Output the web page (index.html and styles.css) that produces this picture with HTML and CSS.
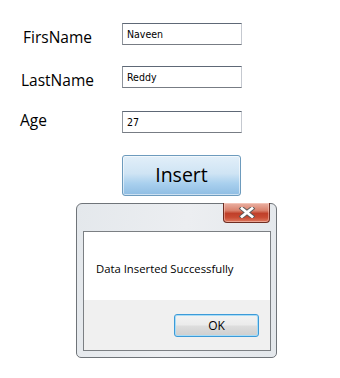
FILE: index.html
```html
<!DOCTYPE html>
<html>
<head>
<meta charset="utf-8">
<link rel="stylesheet" href="styles.css">
</head>
<body>
<div class="form">
  <div class="row row1">
    <span class="label l1">FirsName</span>
    <div class="textbox">Naveen</div>
  </div>
  <div class="row row2">
    <span class="label l2">LastName</span>
    <div class="textbox">Reddy</div>
  </div>
  <div class="row row3">
    <span class="label l3">Age</span>
    <div class="textbox">27</div>
  </div>
  <div class="btn-row">
    <div class="insert">Insert</div>
  </div>
</div>
<div class="dialog">
  <div class="titlebar">
    <div class="close">
      <svg width="18" height="11" viewBox="0 0 18 11">
        <path d="M4 1.5 L14 9.5 M14 1.5 L4 9.5" stroke="#595959" stroke-width="4.6" stroke-linecap="square" fill="none"/>
        <path d="M4 1.5 L14 9.5 M14 1.5 L4 9.5" stroke="#ffffff" stroke-width="2.8" stroke-linecap="square" fill="none"/>
      </svg>
    </div>
  </div>
  <div class="client">
    <div class="msg">Data Inserted Successfully</div>
    <div class="footer">
      <div class="ok">OK</div>
    </div>
  </div>
</div>
</body>
</html>
```
FILE: styles.css
```css
html, body {
  margin: 0;
  padding: 0;
  background: #ffffff;
}
body {
  width: 340px;
  height: 378px;
  overflow: hidden;
  font-family: "Open Sans", "Liberation Sans", sans-serif;
  color: #000;
}
.form {
  padding-top: 23px;
}
.row {
  display: flex;
  align-items: flex-start;
  height: 22px;
}
.row1 { margin-bottom: 21px; }
.row2 { margin-bottom: 23px; }
.label {
  width: 122px;
  box-sizing: border-box;
  font-size: 15.5px;
  line-height: 20px;
}
.l1 { padding-left: 23px; padding-top: 4px; }
.l2 { padding-left: 21px; padding-top: 4px; }
.l3 { padding-left: 20px; margin-top: -1px; }
.textbox {
  width: 120px;
  height: 22px;
  box-sizing: border-box;
  border: 1px solid #abadb3;
  border-top-color: #5e6876;
  border-left-color: #8e949c;
  border-right-color: #c5c9d0;
  border-bottom-color: #777c84;
  padding: 0 0 0 4px;
  font-family: "DejaVu Sans Condensed", "DejaVu Sans", sans-serif;
  font-size: 10.5px;
  line-height: 20px;
  color: #000;
}
.btn-row {
  padding-top: 22px;
  padding-left: 122px;
}
.insert {
  width: 119px;
  height: 41px;
  box-sizing: border-box;
  border: 1px solid #6d9bbd;
  border-radius: 3px;
  background: linear-gradient(#e2eff9 0%, #cfe4f4 45%, #a9d0ee 70%, #8fbde3 100%);
  box-shadow: inset 0 0 0 1px rgba(255,255,255,0.55);
  text-align: center;
  font-size: 19.5px;
  line-height: 38px;
  color: #000;
}
.dialog {
  margin-top: 7px;
  margin-left: 76px;
  width: 201px;
  height: 155px;
  box-sizing: border-box;
  border: 1px solid #6f7479;
  border-radius: 6px 6px 5px 5px;
  background: linear-gradient(100deg, #e4e8ec 0%, #eceef1 50%, #e3e7eb 100%);
  padding: 0 5px 6px 6px;
  display: flex;
  flex-direction: column;
}
.titlebar {
  height: 27px;
  display: flex;
  justify-content: flex-end;
  padding-right: 1px;
}
.close {
  width: 47px;
  height: 20px;
  margin-top: -1px;
  box-sizing: border-box;
  border: 1px solid #6e2d22;
  border-top: none;
  border-radius: 0 0 4px 4px;
  background: linear-gradient(#eab1a3 0%, #d9806b 40%, #c0402a 55%, #c84a32 75%, #de7a60 100%);
  box-shadow: inset 0 0 0 1px rgba(255,220,210,0.45);
  display: flex;
  align-items: center;
  justify-content: center;
}
.close svg { display: block; }
.client {
  flex: 1;
  border: 1px solid #7b7f83;
  background: #ffffff;
  display: flex;
  flex-direction: column;
}
.msg {
  height: 68px;
  box-sizing: border-box;
  padding-left: 12px;
  padding-top: 29px;
  font-size: 11.3px;
  line-height: 16px;
  color: #000;
}
.footer {
  flex: 1;
  background: #f0f0f0;
  display: flex;
  justify-content: flex-end;
  align-items: flex-start;
  padding: 14px 11px 0 0;
}
.ok {
  width: 85px;
  height: 23px;
  box-sizing: border-box;
  border: 1px solid #3c9ad8;
  border-radius: 3px;
  background: linear-gradient(#f3f3f3 0%, #ebebeb 48%, #dddddd 52%, #cfcfcf 100%);
  box-shadow: inset 0 0 0 1px #a8dcf6;
  text-align: center;
  font-size: 12px;
  line-height: 21px;
  color: #000;
}
```
